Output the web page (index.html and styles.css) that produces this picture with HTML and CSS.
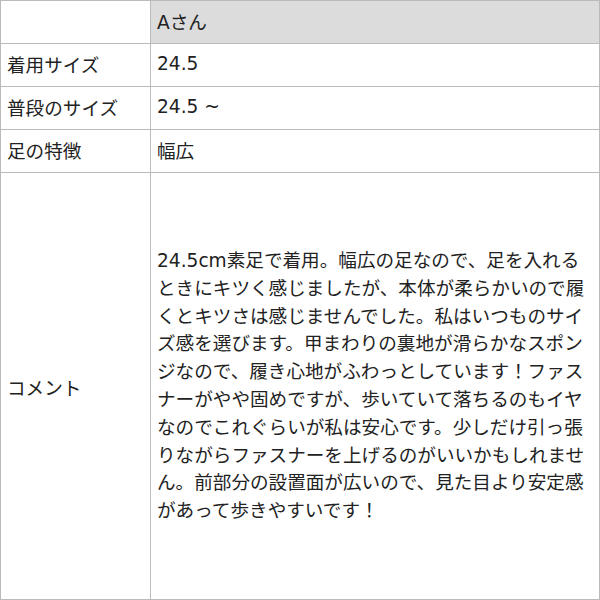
FILE: index.html
```html
<!DOCTYPE html>
<html lang="ja">

<head>
    <meta charset="UTF-8">
    <title>サイズ感レビュー</title>
    <link rel="stylesheet" href="styles.css">
</head>

<body>
    <table class="review">
        <tr class="head">
            <th class="label"></th>
            <th class="value">Aさん</th>
        </tr>
        <tr>
            <td class="label">着用サイズ</td>
            <td class="value">24.5</td>
        </tr>
        <tr>
            <td class="label">普段のサイズ</td>
            <td class="value">24.5 ~</td>
        </tr>
        <tr>
            <td class="label">足の特徴</td>
            <td class="value">幅広</td>
        </tr>
        <tr class="comment">
            <td class="label">コメント</td>
            <td class="value">
                24.5cm素足で着用。幅広の足なので、足を入れる<br>ときにキツく感じましたが、本体が柔らかいので履くとキツさは感じませんでした。私はいつものサイズ感を選びます。甲まわりの裏地が滑らかなスポンジなので、履き心地がふわっとしています！ファスナーがやや固めですが、歩いていて落ちるのもイヤなのでこれぐらいが私は安心です。少しだけ引っ張りながらファスナーを上げるのがいいかもしれません。前部分の設置面が広いので、見た目より安定感があって歩きやすいです！
            </td>
        </tr>
    </table>
</body>

</html>
```

FILE: styles.css
```css
body {
    margin: 0;
    font-family: "DejaVu Sans", "Noto Sans CJK JP", sans-serif;
    color: #222;
}

.review {
    width: 600px;
    height: 600px;
    border-collapse: collapse;
    table-layout: fixed;
    font-size: 18.6px;
}

.review th,
.review td {
    border: 1px solid #bbb;
    padding: 0 6px 4px;
    height: 38px;
    text-align: left;
    font-weight: normal;
    vertical-align: middle;
}

.review .label {
    width: 137px;
}

.head .value {
    background-color: #dcdcdc;
}

.comment td {
    height: auto;
    padding-bottom: 0;
}

.comment .value {
    line-height: 27.8px;
    padding-right: 6px;
}
```
